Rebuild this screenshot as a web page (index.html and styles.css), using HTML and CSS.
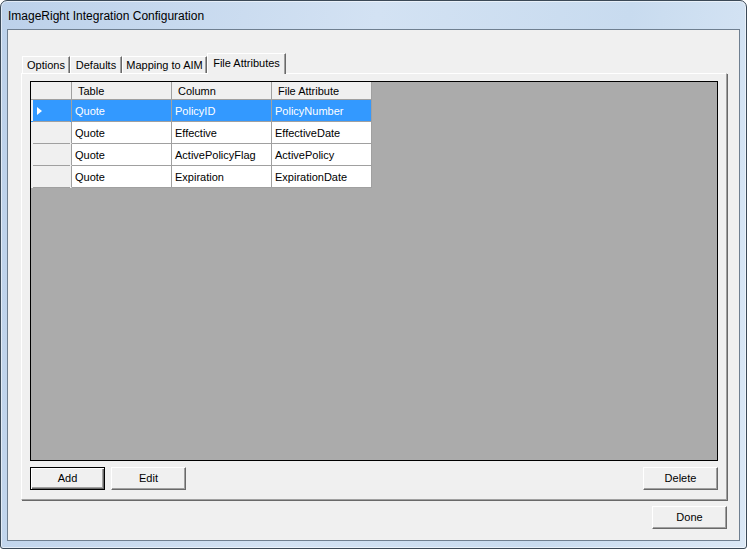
FILE: index.html
```html
<!DOCTYPE html>
<html lang="en">
<head>
    <meta charset="UTF-8">
    <title>ImageRight Integration Configuration</title>
    <link rel="stylesheet" href="styles.css">
</head>
<body>
    <div class="window">
        <div class="title-bar">ImageRight Integration Configuration</div>
        <div class="client">
            <div class="tab-strip">
                <div class="tab tab-options">Options</div>
                <div class="tab tab-defaults">Defaults</div>
                <div class="tab tab-mapping">Mapping to AIM</div>
                <div class="tab tab-files active">File Attributes</div>
            </div>
            <div class="tab-panel">
                <div class="grid">
                    <table class="grid-table">
                        <colgroup>
                            <col class="col-head">
                            <col class="col-data">
                            <col class="col-data">
                            <col class="col-data">
                        </colgroup>
                        <thead>
                            <tr>
                                <th class="row-head"></th>
                                <th>Table</th>
                                <th>Column</th>
                                <th>File Attribute</th>
                            </tr>
                        </thead>
                        <tbody>
                            <tr class="selected">
                                <td class="row-head"><span class="arrow"></span></td>
                                <td>Quote</td>
                                <td>PolicyID</td>
                                <td>PolicyNumber</td>
                            </tr>
                            <tr>
                                <td class="row-head"></td>
                                <td>Quote</td>
                                <td>Effective</td>
                                <td>EffectiveDate</td>
                            </tr>
                            <tr>
                                <td class="row-head"></td>
                                <td>Quote</td>
                                <td>ActivePolicyFlag</td>
                                <td>ActivePolicy</td>
                            </tr>
                            <tr>
                                <td class="row-head"></td>
                                <td>Quote</td>
                                <td>Expiration</td>
                                <td>ExpirationDate</td>
                            </tr>
                        </tbody>
                    </table>
                </div>
                <div class="grid-buttons">
                    <button class="btn btn-default">Add</button>
                    <button class="btn">Edit</button>
                    <button class="btn btn-right">Delete</button>
                </div>
            </div>
            <div class="footer">
                <button class="btn">Done</button>
            </div>
        </div>
    </div>
</body>
</html>
```

FILE: styles.css
```css
* {
    box-sizing: border-box;
}

body {
    margin: 0;
    font-family: "Liberation Sans", Arial, sans-serif;
    font-size: 11px;
    color: #000;
    background: #fff;
}

/* window frame */
.window {
    width: 747px;
    height: 549px;
    border: 1px solid #3b4957;
    border-radius: 7px 7px 3px 3px;
    background: linear-gradient(100deg, #bcd1ea 0%, #d3e2f3 45%, #c8dbef 75%, #dbe8f6 100%);
    box-shadow: inset 0 0 0 1px rgba(255, 255, 255, 0.55);
}

.title-bar {
    height: 28px;
    padding: 8px 0 0 7px;
    font-size: 12px;
    line-height: 14px;
}

.client {
    margin: 0 6px;
    height: 512px;
    border: 1px solid #6f7f90;
    background: #f0f0f0;
    padding: 23px 12px 0 13px;
}

/* tabs */
.tab-strip {
    display: flex;
    align-items: flex-end;
    height: 20px;
    padding-left: 1px;
    position: relative;
    z-index: 1;
}

.tab {
    height: 17px;
    border-top: 1px solid #fff;
    border-left: 1px solid #fff;
    border-right: 1px solid #696969;
    box-shadow: inset -1px 0 0 #a0a0a0;
    background: #f0f0f0;
    text-align: center;
    line-height: 16px;
    white-space: nowrap;
}

.tab-options { width: 48px; }
.tab-defaults { width: 52px; }
.tab-mapping { width: 85px; }
.tab-files { width: 79px; }

.tab.active {
    height: 21px;
    margin-bottom: -1px;
    padding-top: 1px;
}

.tab-panel {
    border: 1px solid;
    border-color: #fff #a0a0a0 #a0a0a0 #fff;
    box-shadow: 1px 1px 0 #696969;
    padding: 7px 8px 9px 8px;
}

/* data grid */
.grid {
    height: 380px;
    border: 1px solid #000;
    background: #ababab;
}

.grid-table {
    width: 341px;
    table-layout: fixed;
    border-collapse: separate;
    border-spacing: 0;
}

.col-head { width: 41px; }
.col-data { width: 100px; }

.grid-table th,
.grid-table td {
    padding: 1px 0 0 3px;
    border-right: 1px solid #a0a0a0;
    border-bottom: 1px solid #a0a0a0;
    white-space: nowrap;
    overflow: hidden;
    text-align: left;
    font-weight: normal;
}

.grid-table th {
    height: 18px;
    line-height: 16px;
    padding-left: 6px;
    background: #f0f0f0;
}

.grid-table td {
    height: 22px;
    line-height: 20px;
    background: #fff;
}

.grid-table td.row-head {
    padding: 0;
    border-bottom-color: transparent;
    background: linear-gradient(#a0a0a0, #a0a0a0) no-repeat 2px 100% / 37px 1px border-box, #f0f0f0;
}

.grid-table tr.selected td {
    background-color: #3399ff;
    color: #fff;
}

.grid-table tr.selected td.row-head {
    background: linear-gradient(#a0a0a0, #a0a0a0) no-repeat 2px 100% / 37px 1px border-box, #3399ff;
    box-shadow: inset 2px 0 0 #f0f0f0;
}

.arrow {
    display: inline-block;
    vertical-align: middle;
    margin-left: 6px;
    margin-top: -1px;
    border-left: 5px solid #fff;
    border-top: 4px solid transparent;
    border-bottom: 4px solid transparent;
}

/* buttons */
.grid-buttons {
    display: flex;
    gap: 6px;
    margin-top: 6px;
}

.btn {
    width: 75px;
    height: 23px;
    padding: 0 0 1px;
    font-family: "Liberation Sans", Arial, sans-serif;
    font-size: 11px;
    color: #000;
    background: #f0f0f0;
    border: 1px solid;
    border-color: #fff #696969 #696969 #fff;
    box-shadow: inset -1px -1px 0 #a0a0a0;
}

.btn-default {
    border: 1px solid #000;
    box-shadow: inset 1px 1px 0 #fff, inset -1px -1px 0 #696969, inset -2px -2px 0 #a0a0a0;
}

.btn-right {
    margin-left: auto;
}

.footer {
    display: flex;
    justify-content: flex-end;
    margin-top: 6px;
}
```
